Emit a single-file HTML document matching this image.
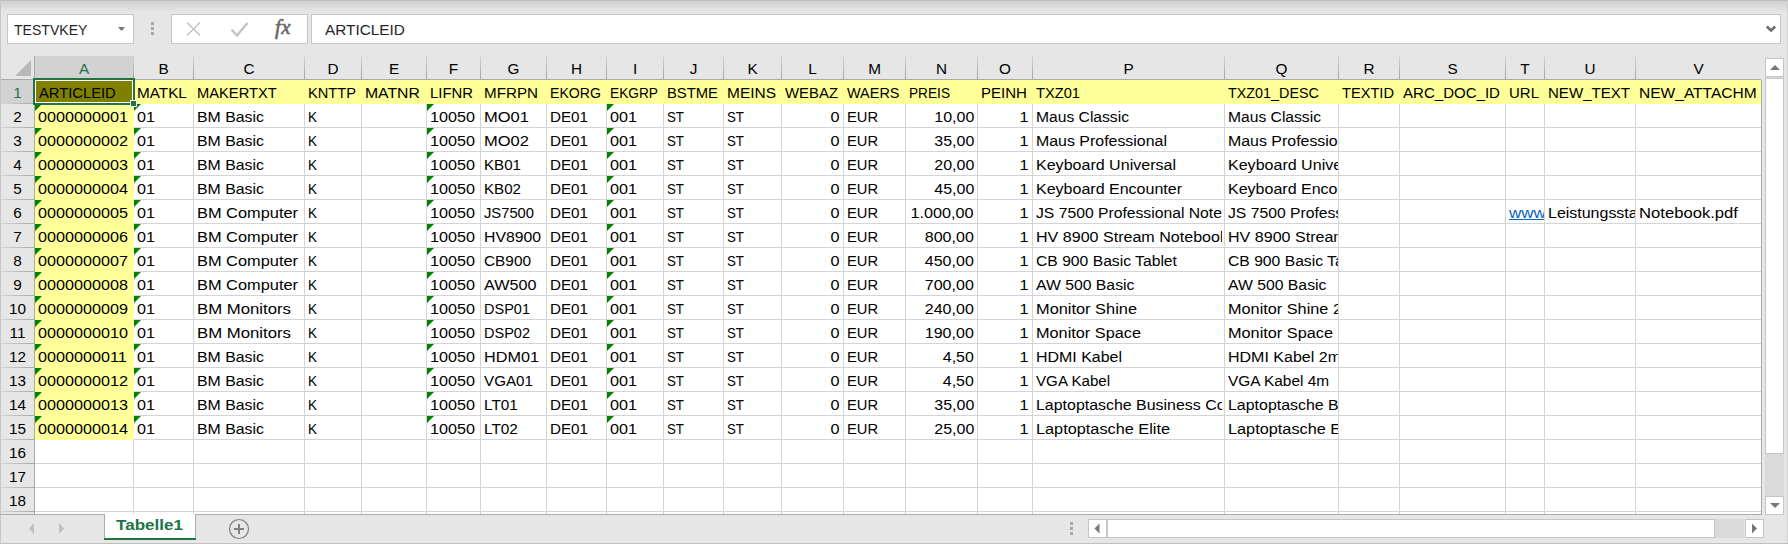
<!DOCTYPE html>
<html><head><meta charset="utf-8"><style>
*{margin:0;padding:0;box-sizing:border-box}
html,body{width:1788px;height:544px;overflow:hidden}
body{position:relative;background:#e6e6e6;font-family:"Liberation Sans",sans-serif;color:#000}
.a{position:absolute}
.t{position:absolute;white-space:nowrap;overflow:hidden;font-size:15.3px;line-height:24px;height:24px}
.gl{position:absolute;background:#d4d4d4}
.c{position:absolute;overflow:hidden;height:24px}
.c span{position:absolute;top:1px;white-space:nowrap;font-size:15.3px;line-height:24px;transform-origin:0 17px}
.c span.r{transform-origin:100% 17px}
</style></head><body>

<div class="a" style="left:0;top:1px;width:1788px;height:11px;background:linear-gradient(#d1d1d1,#e6e6e6)"></div>
<div class="a" style="left:0;top:0;width:1788px;height:1px;background:#bcbcbc"></div>
<div class="a" style="left:7px;top:14px;width:127px;height:30px;background:#fff;border:1px solid #c6c6c6"></div>
<div class="a" style="left:14px;top:18px;white-space:nowrap;font-size:15.3px;line-height:24px;transform-origin:0 0;transform:scaleX(0.9189);color:#262626;">TESTVKEY</div>
<svg class="a" style="left:117px;top:26px" width="10" height="7"><path d="M1 1 L8 1 L4.5 5 Z" fill="#777"/></svg>
<div class="a" style="left:151px;top:22px;width:3px;height:3px;background:#a6a6a6"></div>
<div class="a" style="left:151px;top:27px;width:3px;height:3px;background:#a6a6a6"></div>
<div class="a" style="left:151px;top:32px;width:3px;height:3px;background:#a6a6a6"></div>
<div class="a" style="left:171px;top:14px;width:137px;height:30px;background:#fff;border:1px solid #c6c6c6"></div>
<svg class="a" style="left:180px;top:15px" width="120" height="28"><path d="M7 7.5 L20 20.5 M20 7.5 L7 20.5" stroke="#c2c2c2" stroke-width="1.5" fill="none"/><path d="M51.5 14.5 L57 20.5 L67.5 8" stroke="#c4c4c4" stroke-width="2.4" fill="none"/></svg>
<div class="a" style="left:275px;top:12px;letter-spacing:0.5px;font-family:'Liberation Serif',serif;font-style:italic;font-size:21px;line-height:30px;color:#666;-webkit-text-stroke:0.6px #666">fx</div>
<div class="a" style="left:311px;top:14px;width:1470px;height:30px;background:#fff;border:1px solid #c6c6c6"></div>
<div class="a" style="left:325px;top:18px;white-space:nowrap;font-size:15.3px;line-height:24px;transform-origin:0 0;transform:scaleX(1.0021);color:#262626;">ARTICLEID</div>
<svg class="a" style="left:1764px;top:24px" width="14" height="10"><path d="M2.8 2.5 L7 6.5 L11.2 2.5" stroke="#6d6d6d" stroke-width="2.5" fill="none"/></svg>
<div class="a" style="left:35px;top:80px;width:1726px;height:434px;background:#fff"></div>
<div class="gl" style="left:133px;top:80px;width:1px;height:434px"></div>
<div class="gl" style="left:193px;top:80px;width:1px;height:434px"></div>
<div class="gl" style="left:304px;top:80px;width:1px;height:434px"></div>
<div class="gl" style="left:361px;top:80px;width:1px;height:434px"></div>
<div class="gl" style="left:426px;top:80px;width:1px;height:434px"></div>
<div class="gl" style="left:480px;top:80px;width:1px;height:434px"></div>
<div class="gl" style="left:546px;top:80px;width:1px;height:434px"></div>
<div class="gl" style="left:606px;top:80px;width:1px;height:434px"></div>
<div class="gl" style="left:663px;top:80px;width:1px;height:434px"></div>
<div class="gl" style="left:723px;top:80px;width:1px;height:434px"></div>
<div class="gl" style="left:781px;top:80px;width:1px;height:434px"></div>
<div class="gl" style="left:843px;top:80px;width:1px;height:434px"></div>
<div class="gl" style="left:905px;top:80px;width:1px;height:434px"></div>
<div class="gl" style="left:977px;top:80px;width:1px;height:434px"></div>
<div class="gl" style="left:1032px;top:80px;width:1px;height:434px"></div>
<div class="gl" style="left:1224px;top:80px;width:1px;height:434px"></div>
<div class="gl" style="left:1338px;top:80px;width:1px;height:434px"></div>
<div class="gl" style="left:1399px;top:80px;width:1px;height:434px"></div>
<div class="gl" style="left:1505px;top:80px;width:1px;height:434px"></div>
<div class="gl" style="left:1544px;top:80px;width:1px;height:434px"></div>
<div class="gl" style="left:1635px;top:80px;width:1px;height:434px"></div>
<div class="gl" style="left:35px;top:103px;width:1726px;height:1px"></div>
<div class="gl" style="left:35px;top:127px;width:1726px;height:1px"></div>
<div class="gl" style="left:35px;top:151px;width:1726px;height:1px"></div>
<div class="gl" style="left:35px;top:175px;width:1726px;height:1px"></div>
<div class="gl" style="left:35px;top:199px;width:1726px;height:1px"></div>
<div class="gl" style="left:35px;top:223px;width:1726px;height:1px"></div>
<div class="gl" style="left:35px;top:247px;width:1726px;height:1px"></div>
<div class="gl" style="left:35px;top:271px;width:1726px;height:1px"></div>
<div class="gl" style="left:35px;top:295px;width:1726px;height:1px"></div>
<div class="gl" style="left:35px;top:319px;width:1726px;height:1px"></div>
<div class="gl" style="left:35px;top:343px;width:1726px;height:1px"></div>
<div class="gl" style="left:35px;top:367px;width:1726px;height:1px"></div>
<div class="gl" style="left:35px;top:391px;width:1726px;height:1px"></div>
<div class="gl" style="left:35px;top:415px;width:1726px;height:1px"></div>
<div class="gl" style="left:35px;top:439px;width:1726px;height:1px"></div>
<div class="gl" style="left:35px;top:463px;width:1726px;height:1px"></div>
<div class="gl" style="left:35px;top:487px;width:1726px;height:1px"></div>
<div class="gl" style="left:35px;top:511px;width:1726px;height:1px"></div>
<div class="a" style="left:35px;top:80px;width:1726px;height:24px;background:#ffff99"></div>
<div class="a" style="left:35px;top:104px;width:99px;height:336px;background:#ffff99"></div>
<div class="a" style="left:0;top:56px;width:1761px;height:24px;background:#e6e6e6"></div>
<div class="a" style="left:34px;top:56px;width:100px;height:23px;background:#d2d2d2"></div>
<div class="a" style="left:0;top:79px;width:1761px;height:1px;background:#ababab"></div>
<div class="a" style="left:133px;top:56px;width:1px;height:23px;background:linear-gradient(#d4d4d4,#a4a4a4)"></div>
<div class="t" style="left:35px;top:57px;width:98px;text-align:center;color:#217346">A</div>
<div class="a" style="left:193px;top:56px;width:1px;height:23px;background:linear-gradient(#d4d4d4,#a4a4a4)"></div>
<div class="t" style="left:134px;top:57px;width:59px;text-align:center;color:#000">B</div>
<div class="a" style="left:304px;top:56px;width:1px;height:23px;background:linear-gradient(#d4d4d4,#a4a4a4)"></div>
<div class="t" style="left:194px;top:57px;width:110px;text-align:center;color:#000">C</div>
<div class="a" style="left:361px;top:56px;width:1px;height:23px;background:linear-gradient(#d4d4d4,#a4a4a4)"></div>
<div class="t" style="left:305px;top:57px;width:56px;text-align:center;color:#000">D</div>
<div class="a" style="left:426px;top:56px;width:1px;height:23px;background:linear-gradient(#d4d4d4,#a4a4a4)"></div>
<div class="t" style="left:362px;top:57px;width:64px;text-align:center;color:#000">E</div>
<div class="a" style="left:480px;top:56px;width:1px;height:23px;background:linear-gradient(#d4d4d4,#a4a4a4)"></div>
<div class="t" style="left:427px;top:57px;width:53px;text-align:center;color:#000">F</div>
<div class="a" style="left:546px;top:56px;width:1px;height:23px;background:linear-gradient(#d4d4d4,#a4a4a4)"></div>
<div class="t" style="left:481px;top:57px;width:65px;text-align:center;color:#000">G</div>
<div class="a" style="left:606px;top:56px;width:1px;height:23px;background:linear-gradient(#d4d4d4,#a4a4a4)"></div>
<div class="t" style="left:547px;top:57px;width:59px;text-align:center;color:#000">H</div>
<div class="a" style="left:663px;top:56px;width:1px;height:23px;background:linear-gradient(#d4d4d4,#a4a4a4)"></div>
<div class="t" style="left:607px;top:57px;width:56px;text-align:center;color:#000">I</div>
<div class="a" style="left:723px;top:56px;width:1px;height:23px;background:linear-gradient(#d4d4d4,#a4a4a4)"></div>
<div class="t" style="left:664px;top:57px;width:59px;text-align:center;color:#000">J</div>
<div class="a" style="left:781px;top:56px;width:1px;height:23px;background:linear-gradient(#d4d4d4,#a4a4a4)"></div>
<div class="t" style="left:724px;top:57px;width:57px;text-align:center;color:#000">K</div>
<div class="a" style="left:843px;top:56px;width:1px;height:23px;background:linear-gradient(#d4d4d4,#a4a4a4)"></div>
<div class="t" style="left:782px;top:57px;width:61px;text-align:center;color:#000">L</div>
<div class="a" style="left:905px;top:56px;width:1px;height:23px;background:linear-gradient(#d4d4d4,#a4a4a4)"></div>
<div class="t" style="left:844px;top:57px;width:61px;text-align:center;color:#000">M</div>
<div class="a" style="left:977px;top:56px;width:1px;height:23px;background:linear-gradient(#d4d4d4,#a4a4a4)"></div>
<div class="t" style="left:906px;top:57px;width:71px;text-align:center;color:#000">N</div>
<div class="a" style="left:1032px;top:56px;width:1px;height:23px;background:linear-gradient(#d4d4d4,#a4a4a4)"></div>
<div class="t" style="left:978px;top:57px;width:54px;text-align:center;color:#000">O</div>
<div class="a" style="left:1224px;top:56px;width:1px;height:23px;background:linear-gradient(#d4d4d4,#a4a4a4)"></div>
<div class="t" style="left:1033px;top:57px;width:191px;text-align:center;color:#000">P</div>
<div class="a" style="left:1338px;top:56px;width:1px;height:23px;background:linear-gradient(#d4d4d4,#a4a4a4)"></div>
<div class="t" style="left:1225px;top:57px;width:113px;text-align:center;color:#000">Q</div>
<div class="a" style="left:1399px;top:56px;width:1px;height:23px;background:linear-gradient(#d4d4d4,#a4a4a4)"></div>
<div class="t" style="left:1339px;top:57px;width:60px;text-align:center;color:#000">R</div>
<div class="a" style="left:1505px;top:56px;width:1px;height:23px;background:linear-gradient(#d4d4d4,#a4a4a4)"></div>
<div class="t" style="left:1400px;top:57px;width:105px;text-align:center;color:#000">S</div>
<div class="a" style="left:1544px;top:56px;width:1px;height:23px;background:linear-gradient(#d4d4d4,#a4a4a4)"></div>
<div class="t" style="left:1506px;top:57px;width:38px;text-align:center;color:#000">T</div>
<div class="a" style="left:1635px;top:56px;width:1px;height:23px;background:linear-gradient(#d4d4d4,#a4a4a4)"></div>
<div class="t" style="left:1545px;top:57px;width:90px;text-align:center;color:#000">U</div>
<div class="t" style="left:1636px;top:57px;width:125px;text-align:center;color:#000">V</div>
<svg class="a" style="left:14px;top:59px" width="18" height="18"><path d="M17 1 L17 17 L1 17 Z" fill="#b8b8b8"/></svg>
<div class="a" style="left:34px;top:56px;width:1px;height:458px;background:#ababab"></div>
<div class="a" style="left:1px;top:80px;width:33px;height:23px;background:#d2d2d2"></div>
<div class="a" style="left:1px;top:103px;width:33px;height:1px;background:linear-gradient(90deg,#d4d4d4,#a8a8a8)"></div>
<div class="t" style="left:1px;top:81px;width:33px;text-align:center;color:#217346">1</div>
<div class="a" style="left:1px;top:127px;width:33px;height:1px;background:linear-gradient(90deg,#d4d4d4,#a8a8a8)"></div>
<div class="t" style="left:1px;top:105px;width:33px;text-align:center;color:#000">2</div>
<div class="a" style="left:1px;top:151px;width:33px;height:1px;background:linear-gradient(90deg,#d4d4d4,#a8a8a8)"></div>
<div class="t" style="left:1px;top:129px;width:33px;text-align:center;color:#000">3</div>
<div class="a" style="left:1px;top:175px;width:33px;height:1px;background:linear-gradient(90deg,#d4d4d4,#a8a8a8)"></div>
<div class="t" style="left:1px;top:153px;width:33px;text-align:center;color:#000">4</div>
<div class="a" style="left:1px;top:199px;width:33px;height:1px;background:linear-gradient(90deg,#d4d4d4,#a8a8a8)"></div>
<div class="t" style="left:1px;top:177px;width:33px;text-align:center;color:#000">5</div>
<div class="a" style="left:1px;top:223px;width:33px;height:1px;background:linear-gradient(90deg,#d4d4d4,#a8a8a8)"></div>
<div class="t" style="left:1px;top:201px;width:33px;text-align:center;color:#000">6</div>
<div class="a" style="left:1px;top:247px;width:33px;height:1px;background:linear-gradient(90deg,#d4d4d4,#a8a8a8)"></div>
<div class="t" style="left:1px;top:225px;width:33px;text-align:center;color:#000">7</div>
<div class="a" style="left:1px;top:271px;width:33px;height:1px;background:linear-gradient(90deg,#d4d4d4,#a8a8a8)"></div>
<div class="t" style="left:1px;top:249px;width:33px;text-align:center;color:#000">8</div>
<div class="a" style="left:1px;top:295px;width:33px;height:1px;background:linear-gradient(90deg,#d4d4d4,#a8a8a8)"></div>
<div class="t" style="left:1px;top:273px;width:33px;text-align:center;color:#000">9</div>
<div class="a" style="left:1px;top:319px;width:33px;height:1px;background:linear-gradient(90deg,#d4d4d4,#a8a8a8)"></div>
<div class="t" style="left:1px;top:297px;width:33px;text-align:center;color:#000">10</div>
<div class="a" style="left:1px;top:343px;width:33px;height:1px;background:linear-gradient(90deg,#d4d4d4,#a8a8a8)"></div>
<div class="t" style="left:1px;top:321px;width:33px;text-align:center;color:#000">11</div>
<div class="a" style="left:1px;top:367px;width:33px;height:1px;background:linear-gradient(90deg,#d4d4d4,#a8a8a8)"></div>
<div class="t" style="left:1px;top:345px;width:33px;text-align:center;color:#000">12</div>
<div class="a" style="left:1px;top:391px;width:33px;height:1px;background:linear-gradient(90deg,#d4d4d4,#a8a8a8)"></div>
<div class="t" style="left:1px;top:369px;width:33px;text-align:center;color:#000">13</div>
<div class="a" style="left:1px;top:415px;width:33px;height:1px;background:linear-gradient(90deg,#d4d4d4,#a8a8a8)"></div>
<div class="t" style="left:1px;top:393px;width:33px;text-align:center;color:#000">14</div>
<div class="a" style="left:1px;top:439px;width:33px;height:1px;background:linear-gradient(90deg,#d4d4d4,#a8a8a8)"></div>
<div class="t" style="left:1px;top:417px;width:33px;text-align:center;color:#000">15</div>
<div class="a" style="left:1px;top:463px;width:33px;height:1px;background:linear-gradient(90deg,#d4d4d4,#a8a8a8)"></div>
<div class="t" style="left:1px;top:441px;width:33px;text-align:center;color:#000">16</div>
<div class="a" style="left:1px;top:487px;width:33px;height:1px;background:linear-gradient(90deg,#d4d4d4,#a8a8a8)"></div>
<div class="t" style="left:1px;top:465px;width:33px;text-align:center;color:#000">17</div>
<div class="a" style="left:1px;top:511px;width:33px;height:1px;background:linear-gradient(90deg,#d4d4d4,#a8a8a8)"></div>
<div class="t" style="left:1px;top:489px;width:33px;text-align:center;color:#000">18</div>
<div class="a" style="left:0;top:0;width:1px;height:544px;background:#c6c6c6"></div>
<div class="c" style="left:134px;top:80px;width:59px"><span style="left:3px;transform:scale(0.9998,1);">MATKL</span></div>
<div class="c" style="left:194px;top:80px;width:110px"><span style="left:3px;transform:scale(0.9603,1);">MAKERTXT</span></div>
<div class="c" style="left:305px;top:80px;width:56px"><span style="left:3px;transform:scale(0.9571,1);">KNTTP</span></div>
<div class="c" style="left:362px;top:80px;width:64px"><span style="left:3px;transform:scale(1.0295,1);">MATNR</span></div>
<div class="c" style="left:427px;top:80px;width:53px"><span style="left:3px;transform:scale(0.9728,1);">LIFNR</span></div>
<div class="c" style="left:481px;top:80px;width:65px"><span style="left:3px;transform:scale(0.9928,1);">MFRPN</span></div>
<div class="c" style="left:547px;top:80px;width:59px"><span style="left:3px;transform:scale(0.9229,1);">EKORG</span></div>
<div class="c" style="left:607px;top:80px;width:56px"><span style="left:3px;transform:scale(0.8961,1);">EKGRP</span></div>
<div class="c" style="left:664px;top:80px;width:59px"><span style="left:3px;transform:scale(0.9676,1);">BSTME</span></div>
<div class="c" style="left:724px;top:80px;width:57px"><span style="left:3px;transform:scale(1.0112,1);">MEINS</span></div>
<div class="c" style="left:782px;top:80px;width:61px"><span style="left:3px;transform:scale(0.9742,1);">WEBAZ</span></div>
<div class="c" style="left:844px;top:80px;width:61px"><span style="left:3px;transform:scale(0.9447,1);">WAERS</span></div>
<div class="c" style="left:906px;top:80px;width:71px"><span style="left:3px;transform:scale(0.8930,1);">PREIS</span></div>
<div class="c" style="left:978px;top:80px;width:54px"><span style="left:3px;transform:scale(0.9838,1);">PEINH</span></div>
<div class="c" style="left:1033px;top:80px;width:189px"><span style="left:3px;transform:scale(0.9583,1);">TXZ01</span></div>
<div class="c" style="left:1225px;top:80px;width:113px"><span style="left:3px;transform:scale(0.9388,1);">TXZ01_DESC</span></div>
<div class="c" style="left:1339px;top:80px;width:60px"><span style="left:3px;transform:scale(0.9559,1);">TEXTID</span></div>
<div class="c" style="left:1400px;top:80px;width:105px"><span style="left:3px;transform:scale(0.9836,1);">ARC_DOC_ID</span></div>
<div class="c" style="left:1506px;top:80px;width:38px"><span style="left:3px;transform:scale(0.9802,1);">URL</span></div>
<div class="c" style="left:1545px;top:80px;width:90px"><span style="left:3px;transform:scale(0.9843,1);">NEW_TEXT</span></div>
<div class="c" style="left:1636px;top:80px;width:125px"><span style="left:3px;transform:scale(1.0157,1);">NEW_ATTACHM</span></div>
<div class="c" style="left:35px;top:104px;width:98px"><span style="left:3px;transform:scale(1.0577,1);">0000000001</span></div>
<div class="c" style="left:134px;top:104px;width:59px"><span style="left:3px;transform:scale(1.0577,1);">01</span></div>
<div class="c" style="left:194px;top:104px;width:110px"><span style="left:3px;transform:scale(1.0369,1);">BM Basic</span></div>
<div class="c" style="left:305px;top:104px;width:56px"><span style="left:3px;transform:scale(0.8819,1);">K</span></div>
<div class="c" style="left:427px;top:104px;width:53px"><span style="left:3px;transform:scale(1.0577,1);">10050</span></div>
<div class="c" style="left:481px;top:104px;width:65px"><span style="left:3px;transform:scale(1.0801,1);">MO01</span></div>
<div class="c" style="left:547px;top:104px;width:59px"><span style="left:3px;transform:scale(0.9929,1);">DE01</span></div>
<div class="c" style="left:607px;top:104px;width:56px"><span style="left:3px;transform:scale(1.0577,1);">001</span></div>
<div class="c" style="left:664px;top:104px;width:59px"><span style="left:3px;transform:scale(0.8695,1);">ST</span></div>
<div class="c" style="left:724px;top:104px;width:57px"><span style="left:3px;transform:scale(0.8695,1);">ST</span></div>
<div class="c" style="left:782px;top:104px;width:61px"><span class="r" style="right:3px;transform:scale(1.0577,1);">0</span></div>
<div class="c" style="left:844px;top:104px;width:61px"><span style="left:3px;transform:scale(0.9597,1);">EUR</span></div>
<div class="c" style="left:906px;top:104px;width:71px"><span class="r" style="right:3px;transform:scale(1.0447,1);">10,00</span></div>
<div class="c" style="left:978px;top:104px;width:54px"><span class="r" style="right:3px;transform:scale(1.0577,1);">1</span></div>
<div class="c" style="left:1033px;top:104px;width:189px"><span style="left:3px;transform:scale(1.0223,1);">Maus Classic</span></div>
<div class="c" style="left:1225px;top:104px;width:113px"><span style="left:3px;transform:scale(1.0223,1);">Maus Classic</span></div>
<div class="c" style="left:35px;top:128px;width:98px"><span style="left:3px;transform:scale(1.0577,1);">0000000002</span></div>
<div class="c" style="left:134px;top:128px;width:59px"><span style="left:3px;transform:scale(1.0577,1);">01</span></div>
<div class="c" style="left:194px;top:128px;width:110px"><span style="left:3px;transform:scale(1.0369,1);">BM Basic</span></div>
<div class="c" style="left:305px;top:128px;width:56px"><span style="left:3px;transform:scale(0.8819,1);">K</span></div>
<div class="c" style="left:427px;top:128px;width:53px"><span style="left:3px;transform:scale(1.0577,1);">10050</span></div>
<div class="c" style="left:481px;top:128px;width:65px"><span style="left:3px;transform:scale(1.0801,1);">MO02</span></div>
<div class="c" style="left:547px;top:128px;width:59px"><span style="left:3px;transform:scale(0.9929,1);">DE01</span></div>
<div class="c" style="left:607px;top:128px;width:56px"><span style="left:3px;transform:scale(1.0577,1);">001</span></div>
<div class="c" style="left:664px;top:128px;width:59px"><span style="left:3px;transform:scale(0.8695,1);">ST</span></div>
<div class="c" style="left:724px;top:128px;width:57px"><span style="left:3px;transform:scale(0.8695,1);">ST</span></div>
<div class="c" style="left:782px;top:128px;width:61px"><span class="r" style="right:3px;transform:scale(1.0577,1);">0</span></div>
<div class="c" style="left:844px;top:128px;width:61px"><span style="left:3px;transform:scale(0.9597,1);">EUR</span></div>
<div class="c" style="left:906px;top:128px;width:71px"><span class="r" style="right:3px;transform:scale(1.0447,1);">35,00</span></div>
<div class="c" style="left:978px;top:128px;width:54px"><span class="r" style="right:3px;transform:scale(1.0577,1);">1</span></div>
<div class="c" style="left:1033px;top:128px;width:189px"><span style="left:3px;transform:scale(1.0408,1);">Maus Professional</span></div>
<div class="c" style="left:1225px;top:128px;width:113px"><span style="left:3px;transform:scale(1.0408,1);">Maus Professional</span></div>
<div class="c" style="left:35px;top:152px;width:98px"><span style="left:3px;transform:scale(1.0577,1);">0000000003</span></div>
<div class="c" style="left:134px;top:152px;width:59px"><span style="left:3px;transform:scale(1.0577,1);">01</span></div>
<div class="c" style="left:194px;top:152px;width:110px"><span style="left:3px;transform:scale(1.0369,1);">BM Basic</span></div>
<div class="c" style="left:305px;top:152px;width:56px"><span style="left:3px;transform:scale(0.8819,1);">K</span></div>
<div class="c" style="left:427px;top:152px;width:53px"><span style="left:3px;transform:scale(1.0577,1);">10050</span></div>
<div class="c" style="left:481px;top:152px;width:65px"><span style="left:3px;transform:scale(0.9886,1);">KB01</span></div>
<div class="c" style="left:547px;top:152px;width:59px"><span style="left:3px;transform:scale(0.9929,1);">DE01</span></div>
<div class="c" style="left:607px;top:152px;width:56px"><span style="left:3px;transform:scale(1.0577,1);">001</span></div>
<div class="c" style="left:664px;top:152px;width:59px"><span style="left:3px;transform:scale(0.8695,1);">ST</span></div>
<div class="c" style="left:724px;top:152px;width:57px"><span style="left:3px;transform:scale(0.8695,1);">ST</span></div>
<div class="c" style="left:782px;top:152px;width:61px"><span class="r" style="right:3px;transform:scale(1.0577,1);">0</span></div>
<div class="c" style="left:844px;top:152px;width:61px"><span style="left:3px;transform:scale(0.9597,1);">EUR</span></div>
<div class="c" style="left:906px;top:152px;width:71px"><span class="r" style="right:3px;transform:scale(1.0447,1);">20,00</span></div>
<div class="c" style="left:978px;top:152px;width:54px"><span class="r" style="right:3px;transform:scale(1.0577,1);">1</span></div>
<div class="c" style="left:1033px;top:152px;width:189px"><span style="left:3px;transform:scale(1.0486,1);">Keyboard Universal</span></div>
<div class="c" style="left:1225px;top:152px;width:113px"><span style="left:3px;transform:scale(1.0486,1);">Keyboard Universal</span></div>
<div class="c" style="left:35px;top:176px;width:98px"><span style="left:3px;transform:scale(1.0577,1);">0000000004</span></div>
<div class="c" style="left:134px;top:176px;width:59px"><span style="left:3px;transform:scale(1.0577,1);">01</span></div>
<div class="c" style="left:194px;top:176px;width:110px"><span style="left:3px;transform:scale(1.0369,1);">BM Basic</span></div>
<div class="c" style="left:305px;top:176px;width:56px"><span style="left:3px;transform:scale(0.8819,1);">K</span></div>
<div class="c" style="left:427px;top:176px;width:53px"><span style="left:3px;transform:scale(1.0577,1);">10050</span></div>
<div class="c" style="left:481px;top:176px;width:65px"><span style="left:3px;transform:scale(0.9886,1);">KB02</span></div>
<div class="c" style="left:547px;top:176px;width:59px"><span style="left:3px;transform:scale(0.9929,1);">DE01</span></div>
<div class="c" style="left:607px;top:176px;width:56px"><span style="left:3px;transform:scale(1.0577,1);">001</span></div>
<div class="c" style="left:664px;top:176px;width:59px"><span style="left:3px;transform:scale(0.8695,1);">ST</span></div>
<div class="c" style="left:724px;top:176px;width:57px"><span style="left:3px;transform:scale(0.8695,1);">ST</span></div>
<div class="c" style="left:782px;top:176px;width:61px"><span class="r" style="right:3px;transform:scale(1.0577,1);">0</span></div>
<div class="c" style="left:844px;top:176px;width:61px"><span style="left:3px;transform:scale(0.9597,1);">EUR</span></div>
<div class="c" style="left:906px;top:176px;width:71px"><span class="r" style="right:3px;transform:scale(1.0447,1);">45,00</span></div>
<div class="c" style="left:978px;top:176px;width:54px"><span class="r" style="right:3px;transform:scale(1.0577,1);">1</span></div>
<div class="c" style="left:1033px;top:176px;width:189px"><span style="left:3px;transform:scale(1.0466,1);">Keyboard Encounter</span></div>
<div class="c" style="left:1225px;top:176px;width:113px"><span style="left:3px;transform:scale(1.0466,1);">Keyboard Encounter</span></div>
<div class="c" style="left:35px;top:200px;width:98px"><span style="left:3px;transform:scale(1.0577,1);">0000000005</span></div>
<div class="c" style="left:134px;top:200px;width:59px"><span style="left:3px;transform:scale(1.0577,1);">01</span></div>
<div class="c" style="left:194px;top:200px;width:110px"><span style="left:3px;transform:scale(1.0702,1);">BM Computer</span></div>
<div class="c" style="left:305px;top:200px;width:56px"><span style="left:3px;transform:scale(0.8819,1);">K</span></div>
<div class="c" style="left:427px;top:200px;width:53px"><span style="left:3px;transform:scale(1.0577,1);">10050</span></div>
<div class="c" style="left:481px;top:200px;width:65px"><span style="left:3px;transform:scale(0.9635,1);">JS7500</span></div>
<div class="c" style="left:547px;top:200px;width:59px"><span style="left:3px;transform:scale(0.9929,1);">DE01</span></div>
<div class="c" style="left:607px;top:200px;width:56px"><span style="left:3px;transform:scale(1.0577,1);">001</span></div>
<div class="c" style="left:664px;top:200px;width:59px"><span style="left:3px;transform:scale(0.8695,1);">ST</span></div>
<div class="c" style="left:724px;top:200px;width:57px"><span style="left:3px;transform:scale(0.8695,1);">ST</span></div>
<div class="c" style="left:782px;top:200px;width:61px"><span class="r" style="right:3px;transform:scale(1.0577,1);">0</span></div>
<div class="c" style="left:844px;top:200px;width:61px"><span style="left:3px;transform:scale(0.9597,1);">EUR</span></div>
<div class="c" style="left:906px;top:200px;width:71px"><span class="r" style="right:3px;transform:scale(1.0578,1);">1.000,00</span></div>
<div class="c" style="left:978px;top:200px;width:54px"><span class="r" style="right:3px;transform:scale(1.0577,1);">1</span></div>
<div class="c" style="left:1033px;top:200px;width:189px"><span style="left:3px;transform:scale(1.0264,1);">JS 7500 Professional Notebook</span></div>
<div class="c" style="left:1225px;top:200px;width:113px"><span style="left:3px;transform:scale(1.0264,1);">JS 7500 Professional Notebook</span></div>
<div class="c" style="left:1506px;top:200px;width:38px"><span style="left:3px;transform:scale(1.1100,1);color:#0563c1;text-decoration:underline;">www.notebook.de</span></div>
<div class="c" style="left:1545px;top:200px;width:90px"><span style="left:3px;transform:scale(1.0441,1);">Leistungsstark</span></div>
<div class="c" style="left:1636px;top:200px;width:125px"><span style="left:3px;transform:scale(1.0877,1);">Notebook.pdf</span></div>
<div class="c" style="left:35px;top:224px;width:98px"><span style="left:3px;transform:scale(1.0577,1);">0000000006</span></div>
<div class="c" style="left:134px;top:224px;width:59px"><span style="left:3px;transform:scale(1.0577,1);">01</span></div>
<div class="c" style="left:194px;top:224px;width:110px"><span style="left:3px;transform:scale(1.0702,1);">BM Computer</span></div>
<div class="c" style="left:305px;top:224px;width:56px"><span style="left:3px;transform:scale(0.8819,1);">K</span></div>
<div class="c" style="left:427px;top:224px;width:53px"><span style="left:3px;transform:scale(1.0577,1);">10050</span></div>
<div class="c" style="left:481px;top:224px;width:65px"><span style="left:3px;transform:scale(1.0309,1);">HV8900</span></div>
<div class="c" style="left:547px;top:224px;width:59px"><span style="left:3px;transform:scale(0.9929,1);">DE01</span></div>
<div class="c" style="left:607px;top:224px;width:56px"><span style="left:3px;transform:scale(1.0577,1);">001</span></div>
<div class="c" style="left:664px;top:224px;width:59px"><span style="left:3px;transform:scale(0.8695,1);">ST</span></div>
<div class="c" style="left:724px;top:224px;width:57px"><span style="left:3px;transform:scale(0.8695,1);">ST</span></div>
<div class="c" style="left:782px;top:224px;width:61px"><span class="r" style="right:3px;transform:scale(1.0577,1);">0</span></div>
<div class="c" style="left:844px;top:224px;width:61px"><span style="left:3px;transform:scale(0.9597,1);">EUR</span></div>
<div class="c" style="left:906px;top:224px;width:71px"><span class="r" style="right:3px;transform:scale(1.0471,1);">800,00</span></div>
<div class="c" style="left:978px;top:224px;width:54px"><span class="r" style="right:3px;transform:scale(1.0577,1);">1</span></div>
<div class="c" style="left:1033px;top:224px;width:189px"><span style="left:3px;transform:scale(1.0500,1);">HV 8900 Stream Notebook</span></div>
<div class="c" style="left:1225px;top:224px;width:113px"><span style="left:3px;transform:scale(1.0500,1);">HV 8900 Stream Notebook</span></div>
<div class="c" style="left:35px;top:248px;width:98px"><span style="left:3px;transform:scale(1.0577,1);">0000000007</span></div>
<div class="c" style="left:134px;top:248px;width:59px"><span style="left:3px;transform:scale(1.0577,1);">01</span></div>
<div class="c" style="left:194px;top:248px;width:110px"><span style="left:3px;transform:scale(1.0702,1);">BM Computer</span></div>
<div class="c" style="left:305px;top:248px;width:56px"><span style="left:3px;transform:scale(0.8819,1);">K</span></div>
<div class="c" style="left:427px;top:248px;width:53px"><span style="left:3px;transform:scale(1.0577,1);">10050</span></div>
<div class="c" style="left:481px;top:248px;width:65px"><span style="left:3px;transform:scale(1.0047,1);">CB900</span></div>
<div class="c" style="left:547px;top:248px;width:59px"><span style="left:3px;transform:scale(0.9929,1);">DE01</span></div>
<div class="c" style="left:607px;top:248px;width:56px"><span style="left:3px;transform:scale(1.0577,1);">001</span></div>
<div class="c" style="left:664px;top:248px;width:59px"><span style="left:3px;transform:scale(0.8695,1);">ST</span></div>
<div class="c" style="left:724px;top:248px;width:57px"><span style="left:3px;transform:scale(0.8695,1);">ST</span></div>
<div class="c" style="left:782px;top:248px;width:61px"><span class="r" style="right:3px;transform:scale(1.0577,1);">0</span></div>
<div class="c" style="left:844px;top:248px;width:61px"><span style="left:3px;transform:scale(0.9597,1);">EUR</span></div>
<div class="c" style="left:906px;top:248px;width:71px"><span class="r" style="right:3px;transform:scale(1.0471,1);">450,00</span></div>
<div class="c" style="left:978px;top:248px;width:54px"><span class="r" style="right:3px;transform:scale(1.0577,1);">1</span></div>
<div class="c" style="left:1033px;top:248px;width:189px"><span style="left:3px;transform:scale(1.0253,1);">CB 900 Basic Tablet</span></div>
<div class="c" style="left:1225px;top:248px;width:113px"><span style="left:3px;transform:scale(1.0253,1);">CB 900 Basic Tablet</span></div>
<div class="c" style="left:35px;top:272px;width:98px"><span style="left:3px;transform:scale(1.0577,1);">0000000008</span></div>
<div class="c" style="left:134px;top:272px;width:59px"><span style="left:3px;transform:scale(1.0577,1);">01</span></div>
<div class="c" style="left:194px;top:272px;width:110px"><span style="left:3px;transform:scale(1.0702,1);">BM Computer</span></div>
<div class="c" style="left:305px;top:272px;width:56px"><span style="left:3px;transform:scale(0.8819,1);">K</span></div>
<div class="c" style="left:427px;top:272px;width:53px"><span style="left:3px;transform:scale(1.0577,1);">10050</span></div>
<div class="c" style="left:481px;top:272px;width:65px"><span style="left:3px;transform:scale(1.0563,1);">AW500</span></div>
<div class="c" style="left:547px;top:272px;width:59px"><span style="left:3px;transform:scale(0.9929,1);">DE01</span></div>
<div class="c" style="left:607px;top:272px;width:56px"><span style="left:3px;transform:scale(1.0577,1);">001</span></div>
<div class="c" style="left:664px;top:272px;width:59px"><span style="left:3px;transform:scale(0.8695,1);">ST</span></div>
<div class="c" style="left:724px;top:272px;width:57px"><span style="left:3px;transform:scale(0.8695,1);">ST</span></div>
<div class="c" style="left:782px;top:272px;width:61px"><span class="r" style="right:3px;transform:scale(1.0577,1);">0</span></div>
<div class="c" style="left:844px;top:272px;width:61px"><span style="left:3px;transform:scale(0.9597,1);">EUR</span></div>
<div class="c" style="left:906px;top:272px;width:71px"><span class="r" style="right:3px;transform:scale(1.0471,1);">700,00</span></div>
<div class="c" style="left:978px;top:272px;width:54px"><span class="r" style="right:3px;transform:scale(1.0577,1);">1</span></div>
<div class="c" style="left:1033px;top:272px;width:189px"><span style="left:3px;transform:scale(1.0303,1);">AW 500 Basic</span></div>
<div class="c" style="left:1225px;top:272px;width:113px"><span style="left:3px;transform:scale(1.0303,1);">AW 500 Basic</span></div>
<div class="c" style="left:35px;top:296px;width:98px"><span style="left:3px;transform:scale(1.0577,1);">0000000009</span></div>
<div class="c" style="left:134px;top:296px;width:59px"><span style="left:3px;transform:scale(1.0577,1);">01</span></div>
<div class="c" style="left:194px;top:296px;width:110px"><span style="left:3px;transform:scale(1.0947,1);">BM Monitors</span></div>
<div class="c" style="left:305px;top:296px;width:56px"><span style="left:3px;transform:scale(0.8819,1);">K</span></div>
<div class="c" style="left:427px;top:296px;width:53px"><span style="left:3px;transform:scale(1.0577,1);">10050</span></div>
<div class="c" style="left:481px;top:296px;width:65px"><span style="left:3px;transform:scale(0.9489,1);">DSP01</span></div>
<div class="c" style="left:547px;top:296px;width:59px"><span style="left:3px;transform:scale(0.9929,1);">DE01</span></div>
<div class="c" style="left:607px;top:296px;width:56px"><span style="left:3px;transform:scale(1.0577,1);">001</span></div>
<div class="c" style="left:664px;top:296px;width:59px"><span style="left:3px;transform:scale(0.8695,1);">ST</span></div>
<div class="c" style="left:724px;top:296px;width:57px"><span style="left:3px;transform:scale(0.8695,1);">ST</span></div>
<div class="c" style="left:782px;top:296px;width:61px"><span class="r" style="right:3px;transform:scale(1.0577,1);">0</span></div>
<div class="c" style="left:844px;top:296px;width:61px"><span style="left:3px;transform:scale(0.9597,1);">EUR</span></div>
<div class="c" style="left:906px;top:296px;width:71px"><span class="r" style="right:3px;transform:scale(1.0471,1);">240,00</span></div>
<div class="c" style="left:978px;top:296px;width:54px"><span class="r" style="right:3px;transform:scale(1.0577,1);">1</span></div>
<div class="c" style="left:1033px;top:296px;width:189px"><span style="left:3px;transform:scale(1.0699,1);">Monitor Shine</span></div>
<div class="c" style="left:1225px;top:296px;width:113px"><span style="left:3px;transform:scale(1.0634,1);">Monitor Shine 24</span></div>
<div class="c" style="left:35px;top:320px;width:98px"><span style="left:3px;transform:scale(1.0577,1);">0000000010</span></div>
<div class="c" style="left:134px;top:320px;width:59px"><span style="left:3px;transform:scale(1.0577,1);">01</span></div>
<div class="c" style="left:194px;top:320px;width:110px"><span style="left:3px;transform:scale(1.0947,1);">BM Monitors</span></div>
<div class="c" style="left:305px;top:320px;width:56px"><span style="left:3px;transform:scale(0.8819,1);">K</span></div>
<div class="c" style="left:427px;top:320px;width:53px"><span style="left:3px;transform:scale(1.0577,1);">10050</span></div>
<div class="c" style="left:481px;top:320px;width:65px"><span style="left:3px;transform:scale(0.9489,1);">DSP02</span></div>
<div class="c" style="left:547px;top:320px;width:59px"><span style="left:3px;transform:scale(0.9929,1);">DE01</span></div>
<div class="c" style="left:607px;top:320px;width:56px"><span style="left:3px;transform:scale(1.0577,1);">001</span></div>
<div class="c" style="left:664px;top:320px;width:59px"><span style="left:3px;transform:scale(0.8695,1);">ST</span></div>
<div class="c" style="left:724px;top:320px;width:57px"><span style="left:3px;transform:scale(0.8695,1);">ST</span></div>
<div class="c" style="left:782px;top:320px;width:61px"><span class="r" style="right:3px;transform:scale(1.0577,1);">0</span></div>
<div class="c" style="left:844px;top:320px;width:61px"><span style="left:3px;transform:scale(0.9597,1);">EUR</span></div>
<div class="c" style="left:906px;top:320px;width:71px"><span class="r" style="right:3px;transform:scale(1.0471,1);">190,00</span></div>
<div class="c" style="left:978px;top:320px;width:54px"><span class="r" style="right:3px;transform:scale(1.0577,1);">1</span></div>
<div class="c" style="left:1033px;top:320px;width:189px"><span style="left:3px;transform:scale(1.0644,1);">Monitor Space</span></div>
<div class="c" style="left:1225px;top:320px;width:113px"><span style="left:3px;transform:scale(1.0644,1);">Monitor Space</span></div>
<div class="c" style="left:35px;top:344px;width:98px"><span style="left:3px;transform:scale(1.0577,1);">0000000011</span></div>
<div class="c" style="left:134px;top:344px;width:59px"><span style="left:3px;transform:scale(1.0577,1);">01</span></div>
<div class="c" style="left:194px;top:344px;width:110px"><span style="left:3px;transform:scale(1.0369,1);">BM Basic</span></div>
<div class="c" style="left:305px;top:344px;width:56px"><span style="left:3px;transform:scale(0.8819,1);">K</span></div>
<div class="c" style="left:427px;top:344px;width:53px"><span style="left:3px;transform:scale(1.0577,1);">10050</span></div>
<div class="c" style="left:481px;top:344px;width:65px"><span style="left:3px;transform:scale(1.0605,1);">HDM01</span></div>
<div class="c" style="left:547px;top:344px;width:59px"><span style="left:3px;transform:scale(0.9929,1);">DE01</span></div>
<div class="c" style="left:607px;top:344px;width:56px"><span style="left:3px;transform:scale(1.0577,1);">001</span></div>
<div class="c" style="left:664px;top:344px;width:59px"><span style="left:3px;transform:scale(0.8695,1);">ST</span></div>
<div class="c" style="left:724px;top:344px;width:57px"><span style="left:3px;transform:scale(0.8695,1);">ST</span></div>
<div class="c" style="left:782px;top:344px;width:61px"><span class="r" style="right:3px;transform:scale(1.0577,1);">0</span></div>
<div class="c" style="left:844px;top:344px;width:61px"><span style="left:3px;transform:scale(0.9597,1);">EUR</span></div>
<div class="c" style="left:906px;top:344px;width:71px"><span class="r" style="right:3px;transform:scale(1.0410,1);">4,50</span></div>
<div class="c" style="left:978px;top:344px;width:54px"><span class="r" style="right:3px;transform:scale(1.0577,1);">1</span></div>
<div class="c" style="left:1033px;top:344px;width:189px"><span style="left:3px;transform:scale(1.0427,1);">HDMI Kabel</span></div>
<div class="c" style="left:1225px;top:344px;width:113px"><span style="left:3px;transform:scale(1.0465,1);">HDMI Kabel 2m</span></div>
<div class="c" style="left:35px;top:368px;width:98px"><span style="left:3px;transform:scale(1.0577,1);">0000000012</span></div>
<div class="c" style="left:134px;top:368px;width:59px"><span style="left:3px;transform:scale(1.0577,1);">01</span></div>
<div class="c" style="left:194px;top:368px;width:110px"><span style="left:3px;transform:scale(1.0369,1);">BM Basic</span></div>
<div class="c" style="left:305px;top:368px;width:56px"><span style="left:3px;transform:scale(0.8819,1);">K</span></div>
<div class="c" style="left:427px;top:368px;width:53px"><span style="left:3px;transform:scale(1.0577,1);">10050</span></div>
<div class="c" style="left:481px;top:368px;width:65px"><span style="left:3px;transform:scale(0.9933,1);">VGA01</span></div>
<div class="c" style="left:547px;top:368px;width:59px"><span style="left:3px;transform:scale(0.9929,1);">DE01</span></div>
<div class="c" style="left:607px;top:368px;width:56px"><span style="left:3px;transform:scale(1.0577,1);">001</span></div>
<div class="c" style="left:664px;top:368px;width:59px"><span style="left:3px;transform:scale(0.8695,1);">ST</span></div>
<div class="c" style="left:724px;top:368px;width:57px"><span style="left:3px;transform:scale(0.8695,1);">ST</span></div>
<div class="c" style="left:782px;top:368px;width:61px"><span class="r" style="right:3px;transform:scale(1.0577,1);">0</span></div>
<div class="c" style="left:844px;top:368px;width:61px"><span style="left:3px;transform:scale(0.9597,1);">EUR</span></div>
<div class="c" style="left:906px;top:368px;width:71px"><span class="r" style="right:3px;transform:scale(1.0410,1);">4,50</span></div>
<div class="c" style="left:978px;top:368px;width:54px"><span class="r" style="right:3px;transform:scale(1.0577,1);">1</span></div>
<div class="c" style="left:1033px;top:368px;width:189px"><span style="left:3px;transform:scale(0.9908,1);">VGA Kabel</span></div>
<div class="c" style="left:1225px;top:368px;width:113px"><span style="left:3px;transform:scale(1.0079,1);">VGA Kabel 4m</span></div>
<div class="c" style="left:35px;top:392px;width:98px"><span style="left:3px;transform:scale(1.0577,1);">0000000013</span></div>
<div class="c" style="left:134px;top:392px;width:59px"><span style="left:3px;transform:scale(1.0577,1);">01</span></div>
<div class="c" style="left:194px;top:392px;width:110px"><span style="left:3px;transform:scale(1.0369,1);">BM Basic</span></div>
<div class="c" style="left:305px;top:392px;width:56px"><span style="left:3px;transform:scale(0.8819,1);">K</span></div>
<div class="c" style="left:427px;top:392px;width:53px"><span style="left:3px;transform:scale(1.0577,1);">10050</span></div>
<div class="c" style="left:481px;top:392px;width:65px"><span style="left:3px;transform:scale(1.0036,1);">LT01</span></div>
<div class="c" style="left:547px;top:392px;width:59px"><span style="left:3px;transform:scale(0.9929,1);">DE01</span></div>
<div class="c" style="left:607px;top:392px;width:56px"><span style="left:3px;transform:scale(1.0577,1);">001</span></div>
<div class="c" style="left:664px;top:392px;width:59px"><span style="left:3px;transform:scale(0.8695,1);">ST</span></div>
<div class="c" style="left:724px;top:392px;width:57px"><span style="left:3px;transform:scale(0.8695,1);">ST</span></div>
<div class="c" style="left:782px;top:392px;width:61px"><span class="r" style="right:3px;transform:scale(1.0577,1);">0</span></div>
<div class="c" style="left:844px;top:392px;width:61px"><span style="left:3px;transform:scale(0.9597,1);">EUR</span></div>
<div class="c" style="left:906px;top:392px;width:71px"><span class="r" style="right:3px;transform:scale(1.0447,1);">35,00</span></div>
<div class="c" style="left:978px;top:392px;width:54px"><span class="r" style="right:3px;transform:scale(1.0577,1);">1</span></div>
<div class="c" style="left:1033px;top:392px;width:189px"><span style="left:3px;transform:scale(1.0417,1);">Laptoptasche Business Compact</span></div>
<div class="c" style="left:1225px;top:392px;width:113px"><span style="left:3px;transform:scale(1.0417,1);">Laptoptasche Business Compact</span></div>
<div class="c" style="left:35px;top:416px;width:98px"><span style="left:3px;transform:scale(1.0577,1);">0000000014</span></div>
<div class="c" style="left:134px;top:416px;width:59px"><span style="left:3px;transform:scale(1.0577,1);">01</span></div>
<div class="c" style="left:194px;top:416px;width:110px"><span style="left:3px;transform:scale(1.0369,1);">BM Basic</span></div>
<div class="c" style="left:305px;top:416px;width:56px"><span style="left:3px;transform:scale(0.8819,1);">K</span></div>
<div class="c" style="left:427px;top:416px;width:53px"><span style="left:3px;transform:scale(1.0577,1);">10050</span></div>
<div class="c" style="left:481px;top:416px;width:65px"><span style="left:3px;transform:scale(1.0036,1);">LT02</span></div>
<div class="c" style="left:547px;top:416px;width:59px"><span style="left:3px;transform:scale(0.9929,1);">DE01</span></div>
<div class="c" style="left:607px;top:416px;width:56px"><span style="left:3px;transform:scale(1.0577,1);">001</span></div>
<div class="c" style="left:664px;top:416px;width:59px"><span style="left:3px;transform:scale(0.8695,1);">ST</span></div>
<div class="c" style="left:724px;top:416px;width:57px"><span style="left:3px;transform:scale(0.8695,1);">ST</span></div>
<div class="c" style="left:782px;top:416px;width:61px"><span class="r" style="right:3px;transform:scale(1.0577,1);">0</span></div>
<div class="c" style="left:844px;top:416px;width:61px"><span style="left:3px;transform:scale(0.9597,1);">EUR</span></div>
<div class="c" style="left:906px;top:416px;width:71px"><span class="r" style="right:3px;transform:scale(1.0447,1);">25,00</span></div>
<div class="c" style="left:978px;top:416px;width:54px"><span class="r" style="right:3px;transform:scale(1.0577,1);">1</span></div>
<div class="c" style="left:1033px;top:416px;width:189px"><span style="left:3px;transform:scale(1.0644,1);">Laptoptasche Elite</span></div>
<div class="c" style="left:1225px;top:416px;width:113px"><span style="left:3px;transform:scale(1.0644,1);">Laptoptasche Elite</span></div>
<svg class="a" style="left:35px;top:104px" width="7" height="7"><path d="M0 0 L7 0 L0 7 Z" fill="#008000"/></svg>
<svg class="a" style="left:134px;top:104px" width="7" height="7"><path d="M0 0 L7 0 L0 7 Z" fill="#008000"/></svg>
<svg class="a" style="left:427px;top:104px" width="7" height="7"><path d="M0 0 L7 0 L0 7 Z" fill="#008000"/></svg>
<svg class="a" style="left:607px;top:104px" width="7" height="7"><path d="M0 0 L7 0 L0 7 Z" fill="#008000"/></svg>
<svg class="a" style="left:35px;top:128px" width="7" height="7"><path d="M0 0 L7 0 L0 7 Z" fill="#008000"/></svg>
<svg class="a" style="left:134px;top:128px" width="7" height="7"><path d="M0 0 L7 0 L0 7 Z" fill="#008000"/></svg>
<svg class="a" style="left:427px;top:128px" width="7" height="7"><path d="M0 0 L7 0 L0 7 Z" fill="#008000"/></svg>
<svg class="a" style="left:607px;top:128px" width="7" height="7"><path d="M0 0 L7 0 L0 7 Z" fill="#008000"/></svg>
<svg class="a" style="left:35px;top:152px" width="7" height="7"><path d="M0 0 L7 0 L0 7 Z" fill="#008000"/></svg>
<svg class="a" style="left:134px;top:152px" width="7" height="7"><path d="M0 0 L7 0 L0 7 Z" fill="#008000"/></svg>
<svg class="a" style="left:427px;top:152px" width="7" height="7"><path d="M0 0 L7 0 L0 7 Z" fill="#008000"/></svg>
<svg class="a" style="left:607px;top:152px" width="7" height="7"><path d="M0 0 L7 0 L0 7 Z" fill="#008000"/></svg>
<svg class="a" style="left:35px;top:176px" width="7" height="7"><path d="M0 0 L7 0 L0 7 Z" fill="#008000"/></svg>
<svg class="a" style="left:134px;top:176px" width="7" height="7"><path d="M0 0 L7 0 L0 7 Z" fill="#008000"/></svg>
<svg class="a" style="left:427px;top:176px" width="7" height="7"><path d="M0 0 L7 0 L0 7 Z" fill="#008000"/></svg>
<svg class="a" style="left:607px;top:176px" width="7" height="7"><path d="M0 0 L7 0 L0 7 Z" fill="#008000"/></svg>
<svg class="a" style="left:35px;top:200px" width="7" height="7"><path d="M0 0 L7 0 L0 7 Z" fill="#008000"/></svg>
<svg class="a" style="left:134px;top:200px" width="7" height="7"><path d="M0 0 L7 0 L0 7 Z" fill="#008000"/></svg>
<svg class="a" style="left:427px;top:200px" width="7" height="7"><path d="M0 0 L7 0 L0 7 Z" fill="#008000"/></svg>
<svg class="a" style="left:607px;top:200px" width="7" height="7"><path d="M0 0 L7 0 L0 7 Z" fill="#008000"/></svg>
<svg class="a" style="left:35px;top:224px" width="7" height="7"><path d="M0 0 L7 0 L0 7 Z" fill="#008000"/></svg>
<svg class="a" style="left:134px;top:224px" width="7" height="7"><path d="M0 0 L7 0 L0 7 Z" fill="#008000"/></svg>
<svg class="a" style="left:427px;top:224px" width="7" height="7"><path d="M0 0 L7 0 L0 7 Z" fill="#008000"/></svg>
<svg class="a" style="left:607px;top:224px" width="7" height="7"><path d="M0 0 L7 0 L0 7 Z" fill="#008000"/></svg>
<svg class="a" style="left:35px;top:248px" width="7" height="7"><path d="M0 0 L7 0 L0 7 Z" fill="#008000"/></svg>
<svg class="a" style="left:134px;top:248px" width="7" height="7"><path d="M0 0 L7 0 L0 7 Z" fill="#008000"/></svg>
<svg class="a" style="left:427px;top:248px" width="7" height="7"><path d="M0 0 L7 0 L0 7 Z" fill="#008000"/></svg>
<svg class="a" style="left:607px;top:248px" width="7" height="7"><path d="M0 0 L7 0 L0 7 Z" fill="#008000"/></svg>
<svg class="a" style="left:35px;top:272px" width="7" height="7"><path d="M0 0 L7 0 L0 7 Z" fill="#008000"/></svg>
<svg class="a" style="left:134px;top:272px" width="7" height="7"><path d="M0 0 L7 0 L0 7 Z" fill="#008000"/></svg>
<svg class="a" style="left:427px;top:272px" width="7" height="7"><path d="M0 0 L7 0 L0 7 Z" fill="#008000"/></svg>
<svg class="a" style="left:607px;top:272px" width="7" height="7"><path d="M0 0 L7 0 L0 7 Z" fill="#008000"/></svg>
<svg class="a" style="left:35px;top:296px" width="7" height="7"><path d="M0 0 L7 0 L0 7 Z" fill="#008000"/></svg>
<svg class="a" style="left:134px;top:296px" width="7" height="7"><path d="M0 0 L7 0 L0 7 Z" fill="#008000"/></svg>
<svg class="a" style="left:427px;top:296px" width="7" height="7"><path d="M0 0 L7 0 L0 7 Z" fill="#008000"/></svg>
<svg class="a" style="left:607px;top:296px" width="7" height="7"><path d="M0 0 L7 0 L0 7 Z" fill="#008000"/></svg>
<svg class="a" style="left:35px;top:320px" width="7" height="7"><path d="M0 0 L7 0 L0 7 Z" fill="#008000"/></svg>
<svg class="a" style="left:134px;top:320px" width="7" height="7"><path d="M0 0 L7 0 L0 7 Z" fill="#008000"/></svg>
<svg class="a" style="left:427px;top:320px" width="7" height="7"><path d="M0 0 L7 0 L0 7 Z" fill="#008000"/></svg>
<svg class="a" style="left:607px;top:320px" width="7" height="7"><path d="M0 0 L7 0 L0 7 Z" fill="#008000"/></svg>
<svg class="a" style="left:35px;top:344px" width="7" height="7"><path d="M0 0 L7 0 L0 7 Z" fill="#008000"/></svg>
<svg class="a" style="left:134px;top:344px" width="7" height="7"><path d="M0 0 L7 0 L0 7 Z" fill="#008000"/></svg>
<svg class="a" style="left:427px;top:344px" width="7" height="7"><path d="M0 0 L7 0 L0 7 Z" fill="#008000"/></svg>
<svg class="a" style="left:607px;top:344px" width="7" height="7"><path d="M0 0 L7 0 L0 7 Z" fill="#008000"/></svg>
<svg class="a" style="left:35px;top:368px" width="7" height="7"><path d="M0 0 L7 0 L0 7 Z" fill="#008000"/></svg>
<svg class="a" style="left:134px;top:368px" width="7" height="7"><path d="M0 0 L7 0 L0 7 Z" fill="#008000"/></svg>
<svg class="a" style="left:427px;top:368px" width="7" height="7"><path d="M0 0 L7 0 L0 7 Z" fill="#008000"/></svg>
<svg class="a" style="left:607px;top:368px" width="7" height="7"><path d="M0 0 L7 0 L0 7 Z" fill="#008000"/></svg>
<svg class="a" style="left:35px;top:392px" width="7" height="7"><path d="M0 0 L7 0 L0 7 Z" fill="#008000"/></svg>
<svg class="a" style="left:134px;top:392px" width="7" height="7"><path d="M0 0 L7 0 L0 7 Z" fill="#008000"/></svg>
<svg class="a" style="left:427px;top:392px" width="7" height="7"><path d="M0 0 L7 0 L0 7 Z" fill="#008000"/></svg>
<svg class="a" style="left:607px;top:392px" width="7" height="7"><path d="M0 0 L7 0 L0 7 Z" fill="#008000"/></svg>
<svg class="a" style="left:35px;top:416px" width="7" height="7"><path d="M0 0 L7 0 L0 7 Z" fill="#008000"/></svg>
<svg class="a" style="left:134px;top:416px" width="7" height="7"><path d="M0 0 L7 0 L0 7 Z" fill="#008000"/></svg>
<svg class="a" style="left:427px;top:416px" width="7" height="7"><path d="M0 0 L7 0 L0 7 Z" fill="#008000"/></svg>
<svg class="a" style="left:607px;top:416px" width="7" height="7"><path d="M0 0 L7 0 L0 7 Z" fill="#008000"/></svg>
<div class="a" style="left:33px;top:78px;width:102px;height:27px;background:#217346"></div>
<div class="a" style="left:35px;top:80px;width:98px;height:23px;background:#fff"></div>
<div class="a" style="left:36px;top:81px;width:96px;height:21px;background:#808000"></div>
<div class="a" style="left:39px;top:81px;white-space:nowrap;font-size:15.3px;line-height:24px;transform-origin:0 0;transform:scaleX(0.9635);color:#000;">ARTICLEID</div>
<div class="a" style="left:130px;top:100px;width:7px;height:7px;background:#fff"></div>
<div class="a" style="left:131px;top:101px;width:5px;height:5px;background:#217346"></div>
<div class="a" style="left:1761px;top:80px;width:1px;height:434px;background:#ababab"></div>
<div class="a" style="left:1765px;top:58px;width:19px;height:456px;background:#dadada"></div>
<div class="a" style="left:1765px;top:58px;width:19px;height:19px;background:#fff;border:1px solid #c6c6c6"></div>
<svg class="a" style="left:1768px;top:62px" width="14" height="10"><path d="M2 8 L12 8 L7 3 Z" fill="#777"/></svg>
<div class="a" style="left:1765px;top:78px;width:19px;height:376px;background:#fff;border:1px solid #c6c6c6"></div>
<div class="a" style="left:1765px;top:496px;width:19px;height:19px;background:#fff;border:1px solid #c6c6c6"></div>
<svg class="a" style="left:1768px;top:501px" width="14" height="10"><path d="M2 2 L12 2 L7 7 Z" fill="#777"/></svg>
<div class="a" style="left:0;top:514px;width:1762px;height:1px;background:#ababab"></div>
<svg class="a" style="left:26px;top:522px" width="40" height="14"><path d="M8 1 L3 6.5 L8 12 Z" fill="#c0c0c0"/><path d="M33 1 L38 6.5 L33 12 Z" fill="#c0c0c0"/></svg>
<div class="a" style="left:104px;top:514px;width:92px;height:26px;background:#fff;border-left:1px solid #ababab;border-right:1px solid #ababab"></div>
<div class="a" style="left:104px;top:538px;width:92px;height:2px;background:#217346"></div>
<div class="a" style="left:116px;top:513px;white-space:nowrap;font-size:15.5px;line-height:24px;transform-origin:0 0;transform:scaleX(1.1000);color:#217346;font-weight:bold;">Tabelle1</div>
<svg class="a" style="left:228px;top:518px" width="22" height="22"><circle cx="11" cy="11" r="9.5" stroke="#808080" stroke-width="1.2" fill="none"/><path d="M6 11 L16 11 M11 6 L11 16" stroke="#808080" stroke-width="2"/></svg>
<div class="a" style="left:1070px;top:522px;width:3px;height:3px;background:#a6a6a6"></div>
<div class="a" style="left:1070px;top:527px;width:3px;height:3px;background:#a6a6a6"></div>
<div class="a" style="left:1070px;top:532px;width:3px;height:3px;background:#a6a6a6"></div>
<div class="a" style="left:1088px;top:519px;width:19px;height:19px;background:#fff;border:1px solid #c6c6c6"></div>
<svg class="a" style="left:1090px;top:521px" width="14" height="14"><path d="M9.5 2.5 L4.5 7.5 L9.5 12.5 Z" fill="#777"/></svg>
<div class="a" style="left:1107px;top:519px;width:637px;height:19px;background:#dadada"></div>
<div class="a" style="left:1107px;top:519px;width:608px;height:19px;background:#fff;border:1px solid #c6c6c6"></div>
<div class="a" style="left:1745px;top:519px;width:19px;height:19px;background:#fff;border:1px solid #c6c6c6"></div>
<svg class="a" style="left:1747px;top:521px" width="14" height="14"><path d="M5 2.5 L10 7.5 L5 12.5 Z" fill="#777"/></svg>
<div class="a" style="left:1787px;top:0;width:1px;height:544px;background:#cfcfcf"></div>
<div class="a" style="left:0;top:543px;width:1788px;height:1px;background:#c0c0c0"></div>
</body></html>
